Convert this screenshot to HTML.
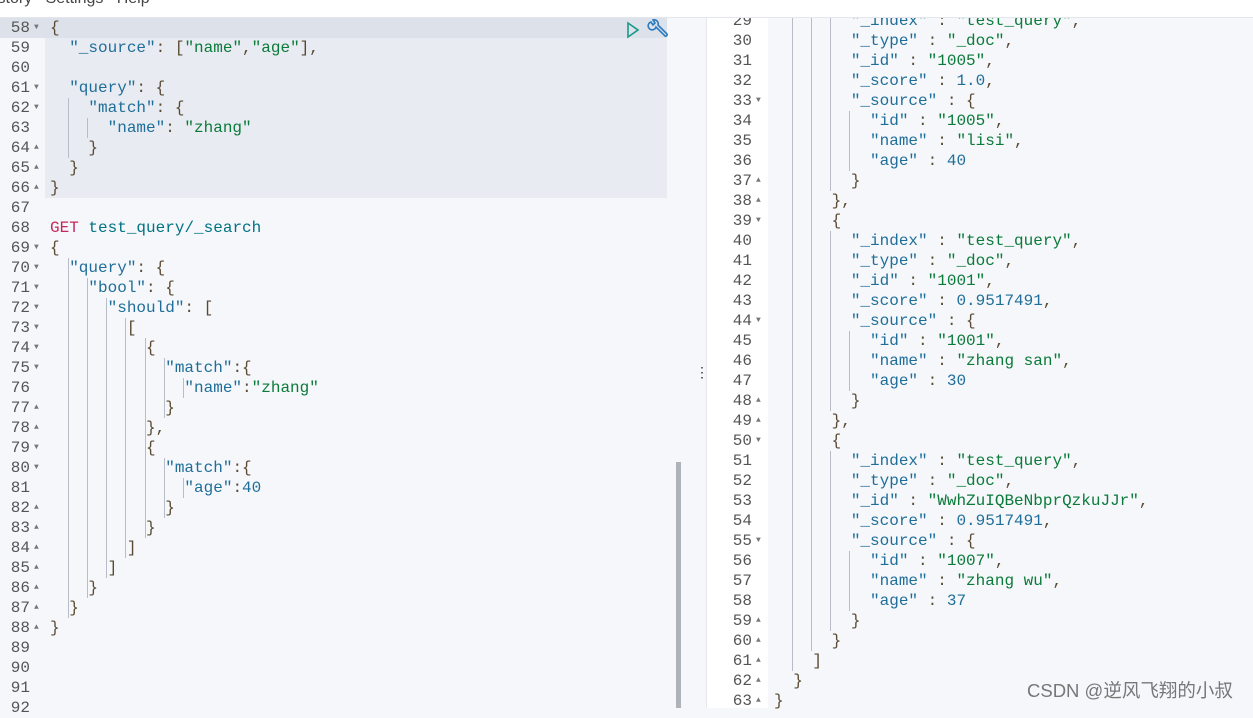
<!DOCTYPE html>
<html><head><meta charset="utf-8"><style>
body{margin:0;width:1253px;height:708px;overflow:hidden;background:#f5f7fa;position:relative;font-family:"Liberation Mono",monospace;font-size:16px}
.top{position:absolute;left:0;top:0;width:1253px;height:17px;background:#fff;border-bottom:1px solid #e3e6ec;z-index:5;overflow:hidden}
.top span{position:absolute;top:-10px;left:-6px;font-family:"Liberation Sans",sans-serif;font-size:16px;color:#444;white-space:pre}
.l{position:absolute;height:20px;line-height:20px;white-space:pre}
.n{position:absolute;height:20px;line-height:20px;color:#555;text-align:right;width:30px}
.f{position:absolute;height:20px;line-height:20px;font-size:8px;color:#777}
.k{color:#1f6e99}.s{color:#0b7a3a}.p{color:#5b4a32}.m{color:#1f6e99}.g{color:#c5285b}.u{color:#007383}
.gd{position:absolute;width:1px;background:#b7bcc7}
</style></head><body>
<div class="top"><span>istory   Settings   Help</span></div>
<div style="position:absolute;left:0;top:18px;width:45px;height:690px;background:#f5f7fa"></div>
<div style="position:absolute;left:0;top:18px;width:45px;height:20px;background:#dde2ea"></div>
<div style="position:absolute;left:45px;top:18px;width:622px;height:180px;background:#e8ebf1"></div>
<div style="position:absolute;left:45px;top:18px;width:622px;height:20px;background:#dde2ea"></div>
<svg style="position:absolute;left:625px;top:21px" width="16" height="18"><path d="M3 2 L13 9 L3 16 Z" fill="none" stroke="#1a9a8a" stroke-width="1.6"/></svg>
<svg style="position:absolute;left:647px;top:19px" width="22" height="22"><path d="M4 3 a4 4 0 1 0 5 5 l9 9 a1.5 1.5 0 0 0 2 -2 l-9 -9 a4 4 0 0 0 -5 -5 l2 3 -2 2 z" fill="none" stroke="#2a7ac0" stroke-width="1.6"/></svg>
<div style="position:absolute;left:676px;top:462px;width:5px;height:246px;background:#aeb2b9"></div>
<div style="position:absolute;left:688px;top:18px;width:18px;height:690px;background:#f5f7fa"></div>
<div style="position:absolute;left:695px;top:364px;color:#333;font-family:'Liberation Sans';font-size:14px">⋮</div>
<div style="position:absolute;left:706px;top:18px;width:62px;height:690px;background:#fff"></div>
<div style="position:absolute;left:706px;top:18px;width:1px;height:690px;background:#e6e8ec"></div>

<div id="L">
<div class="n" style="left:0;top:18px">58</div><div class="f" style="left:34px;top:18px">▼</div>
<div class="n" style="left:0;top:38px">59</div>
<div class="n" style="left:0;top:58px">60</div>
<div class="n" style="left:0;top:78px">61</div><div class="f" style="left:34px;top:78px">▼</div>
<div class="n" style="left:0;top:98px">62</div><div class="f" style="left:34px;top:98px">▼</div>
<div class="n" style="left:0;top:118px">63</div>
<div class="n" style="left:0;top:138px">64</div><div class="f" style="left:34px;top:138px">▲</div>
<div class="n" style="left:0;top:158px">65</div><div class="f" style="left:34px;top:158px">▲</div>
<div class="n" style="left:0;top:178px">66</div><div class="f" style="left:34px;top:178px">▲</div>
<div class="n" style="left:0;top:198px">67</div>
<div class="n" style="left:0;top:218px">68</div>
<div class="n" style="left:0;top:238px">69</div><div class="f" style="left:34px;top:238px">▼</div>
<div class="n" style="left:0;top:258px">70</div><div class="f" style="left:34px;top:258px">▼</div>
<div class="n" style="left:0;top:278px">71</div><div class="f" style="left:34px;top:278px">▼</div>
<div class="n" style="left:0;top:298px">72</div><div class="f" style="left:34px;top:298px">▼</div>
<div class="n" style="left:0;top:318px">73</div><div class="f" style="left:34px;top:318px">▼</div>
<div class="n" style="left:0;top:338px">74</div><div class="f" style="left:34px;top:338px">▼</div>
<div class="n" style="left:0;top:358px">75</div><div class="f" style="left:34px;top:358px">▼</div>
<div class="n" style="left:0;top:378px">76</div>
<div class="n" style="left:0;top:398px">77</div><div class="f" style="left:34px;top:398px">▲</div>
<div class="n" style="left:0;top:418px">78</div><div class="f" style="left:34px;top:418px">▲</div>
<div class="n" style="left:0;top:438px">79</div><div class="f" style="left:34px;top:438px">▼</div>
<div class="n" style="left:0;top:458px">80</div><div class="f" style="left:34px;top:458px">▼</div>
<div class="n" style="left:0;top:478px">81</div>
<div class="n" style="left:0;top:498px">82</div><div class="f" style="left:34px;top:498px">▲</div>
<div class="n" style="left:0;top:518px">83</div><div class="f" style="left:34px;top:518px">▲</div>
<div class="n" style="left:0;top:538px">84</div><div class="f" style="left:34px;top:538px">▲</div>
<div class="n" style="left:0;top:558px">85</div><div class="f" style="left:34px;top:558px">▲</div>
<div class="n" style="left:0;top:578px">86</div><div class="f" style="left:34px;top:578px">▲</div>
<div class="n" style="left:0;top:598px">87</div><div class="f" style="left:34px;top:598px">▲</div>
<div class="n" style="left:0;top:618px">88</div><div class="f" style="left:34px;top:618px">▲</div>
<div class="n" style="left:0;top:638px">89</div>
<div class="n" style="left:0;top:658px">90</div>
<div class="n" style="left:0;top:678px">91</div>
<div class="n" style="left:0;top:698px">92</div>

<div class="l" style="left:50px;top:18px"><span class="p">{</span></div>
<div class="l" style="left:50px;top:38px">  <span class="k">"_source"</span><span class="p">: [</span><span class="s">"name"</span><span class="p">,</span><span class="s">"age"</span><span class="p">],</span></div>
<div class="l" style="left:50px;top:78px">  <span class="k">"query"</span><span class="p">: {</span></div>
<div class="l" style="left:50px;top:98px">    <span class="k">"match"</span><span class="p">: {</span></div>
<div class="l" style="left:50px;top:118px">      <span class="k">"name"</span><span class="p">: </span><span class="s">"zhang"</span></div>
<div class="l" style="left:50px;top:138px">    <span class="p">}</span></div>
<div class="l" style="left:50px;top:158px">  <span class="p">}</span></div>
<div class="l" style="left:50px;top:178px"><span class="p">}</span></div>
<div class="l" style="left:50px;top:218px"><span class="g">GET</span> <span class="u">test_query/_search</span></div>
<div class="l" style="left:50px;top:238px"><span class="p">{</span></div>
<div class="l" style="left:50px;top:258px">  <span class="k">"query"</span><span class="p">: {</span></div>
<div class="l" style="left:50px;top:278px">    <span class="k">"bool"</span><span class="p">: {</span></div>
<div class="l" style="left:50px;top:298px">      <span class="k">"should"</span><span class="p">: [</span></div>
<div class="l" style="left:50px;top:318px">        <span class="p">[</span></div>
<div class="l" style="left:50px;top:338px">          <span class="p">{</span></div>
<div class="l" style="left:50px;top:358px">            <span class="k">"match"</span><span class="p">:{</span></div>
<div class="l" style="left:50px;top:378px">              <span class="k">"name"</span><span class="p">:</span><span class="s">"zhang"</span></div>
<div class="l" style="left:50px;top:398px">            <span class="p">}</span></div>
<div class="l" style="left:50px;top:418px">          <span class="p">},</span></div>
<div class="l" style="left:50px;top:438px">          <span class="p">{</span></div>
<div class="l" style="left:50px;top:458px">            <span class="k">"match"</span><span class="p">:{</span></div>
<div class="l" style="left:50px;top:478px">              <span class="k">"age"</span><span class="p">:</span><span class="m">40</span></div>
<div class="l" style="left:50px;top:498px">            <span class="p">}</span></div>
<div class="l" style="left:50px;top:518px">          <span class="p">}</span></div>
<div class="l" style="left:50px;top:538px">        <span class="p">]</span></div>
<div class="l" style="left:50px;top:558px">      <span class="p">]</span></div>
<div class="l" style="left:50px;top:578px">    <span class="p">}</span></div>
<div class="l" style="left:50px;top:598px">  <span class="p">}</span></div>
<div class="l" style="left:50px;top:618px"><span class="p">}</span></div>

<div class="gd" style="left:68px;top:98px;height:60px"></div>
<div class="gd" style="left:87px;top:118px;height:20px"></div>
<div class="gd" style="left:68px;top:258px;height:360px"></div>
<div class="gd" style="left:87px;top:278px;height:320px"></div>
<div class="gd" style="left:106px;top:298px;height:280px"></div>
<div class="gd" style="left:125px;top:318px;height:240px"></div>
<div class="gd" style="left:145px;top:338px;height:200px"></div>
<div class="gd" style="left:164px;top:358px;height:60px"></div>
<div class="gd" style="left:164px;top:458px;height:60px"></div>
<div class="gd" style="left:183px;top:378px;height:20px"></div>
<div class="gd" style="left:183px;top:478px;height:20px"></div>
</div>

<div id="R">
<div class="n" style="left:722px;top:11px">29</div>
<div class="n" style="left:722px;top:31px">30</div>
<div class="n" style="left:722px;top:51px">31</div>
<div class="n" style="left:722px;top:71px">32</div>
<div class="n" style="left:722px;top:91px">33</div><div class="f" style="left:756px;top:91px">▼</div>
<div class="n" style="left:722px;top:111px">34</div>
<div class="n" style="left:722px;top:131px">35</div>
<div class="n" style="left:722px;top:151px">36</div>
<div class="n" style="left:722px;top:171px">37</div><div class="f" style="left:756px;top:171px">▲</div>
<div class="n" style="left:722px;top:191px">38</div><div class="f" style="left:756px;top:191px">▲</div>
<div class="n" style="left:722px;top:211px">39</div><div class="f" style="left:756px;top:211px">▼</div>
<div class="n" style="left:722px;top:231px">40</div>
<div class="n" style="left:722px;top:251px">41</div>
<div class="n" style="left:722px;top:271px">42</div>
<div class="n" style="left:722px;top:291px">43</div>
<div class="n" style="left:722px;top:311px">44</div><div class="f" style="left:756px;top:311px">▼</div>
<div class="n" style="left:722px;top:331px">45</div>
<div class="n" style="left:722px;top:351px">46</div>
<div class="n" style="left:722px;top:371px">47</div>
<div class="n" style="left:722px;top:391px">48</div><div class="f" style="left:756px;top:391px">▲</div>
<div class="n" style="left:722px;top:411px">49</div><div class="f" style="left:756px;top:411px">▲</div>
<div class="n" style="left:722px;top:431px">50</div><div class="f" style="left:756px;top:431px">▼</div>
<div class="n" style="left:722px;top:451px">51</div>
<div class="n" style="left:722px;top:471px">52</div>
<div class="n" style="left:722px;top:491px">53</div>
<div class="n" style="left:722px;top:511px">54</div>
<div class="n" style="left:722px;top:531px">55</div><div class="f" style="left:756px;top:531px">▼</div>
<div class="n" style="left:722px;top:551px">56</div>
<div class="n" style="left:722px;top:571px">57</div>
<div class="n" style="left:722px;top:591px">58</div>
<div class="n" style="left:722px;top:611px">59</div><div class="f" style="left:756px;top:611px">▲</div>
<div class="n" style="left:722px;top:631px">60</div><div class="f" style="left:756px;top:631px">▲</div>
<div class="n" style="left:722px;top:651px">61</div><div class="f" style="left:756px;top:651px">▲</div>
<div class="n" style="left:722px;top:671px">62</div><div class="f" style="left:756px;top:671px">▲</div>
<div class="n" style="left:722px;top:691px">63</div><div class="f" style="left:756px;top:691px">▲</div>

<div class="l" style="left:774px;top:11px">        <span class="k">"_index"</span><span class="p"> : </span><span class="s">"test_query"</span><span class="p">,</span></div>
<div class="l" style="left:774px;top:31px">        <span class="k">"_type"</span><span class="p"> : </span><span class="s">"_doc"</span><span class="p">,</span></div>
<div class="l" style="left:774px;top:51px">        <span class="k">"_id"</span><span class="p"> : </span><span class="s">"1005"</span><span class="p">,</span></div>
<div class="l" style="left:774px;top:71px">        <span class="k">"_score"</span><span class="p"> : </span><span class="m">1.0</span><span class="p">,</span></div>
<div class="l" style="left:774px;top:91px">        <span class="k">"_source"</span><span class="p"> : {</span></div>
<div class="l" style="left:774px;top:111px">          <span class="k">"id"</span><span class="p"> : </span><span class="s">"1005"</span><span class="p">,</span></div>
<div class="l" style="left:774px;top:131px">          <span class="k">"name"</span><span class="p"> : </span><span class="s">"lisi"</span><span class="p">,</span></div>
<div class="l" style="left:774px;top:151px">          <span class="k">"age"</span><span class="p"> : </span><span class="m">40</span></div>
<div class="l" style="left:774px;top:171px">        <span class="p">}</span></div>
<div class="l" style="left:774px;top:191px">      <span class="p">},</span></div>
<div class="l" style="left:774px;top:211px">      <span class="p">{</span></div>
<div class="l" style="left:774px;top:231px">        <span class="k">"_index"</span><span class="p"> : </span><span class="s">"test_query"</span><span class="p">,</span></div>
<div class="l" style="left:774px;top:251px">        <span class="k">"_type"</span><span class="p"> : </span><span class="s">"_doc"</span><span class="p">,</span></div>
<div class="l" style="left:774px;top:271px">        <span class="k">"_id"</span><span class="p"> : </span><span class="s">"1001"</span><span class="p">,</span></div>
<div class="l" style="left:774px;top:291px">        <span class="k">"_score"</span><span class="p"> : </span><span class="m">0.9517491</span><span class="p">,</span></div>
<div class="l" style="left:774px;top:311px">        <span class="k">"_source"</span><span class="p"> : {</span></div>
<div class="l" style="left:774px;top:331px">          <span class="k">"id"</span><span class="p"> : </span><span class="s">"1001"</span><span class="p">,</span></div>
<div class="l" style="left:774px;top:351px">          <span class="k">"name"</span><span class="p"> : </span><span class="s">"zhang san"</span><span class="p">,</span></div>
<div class="l" style="left:774px;top:371px">          <span class="k">"age"</span><span class="p"> : </span><span class="m">30</span></div>
<div class="l" style="left:774px;top:391px">        <span class="p">}</span></div>
<div class="l" style="left:774px;top:411px">      <span class="p">},</span></div>
<div class="l" style="left:774px;top:431px">      <span class="p">{</span></div>
<div class="l" style="left:774px;top:451px">        <span class="k">"_index"</span><span class="p"> : </span><span class="s">"test_query"</span><span class="p">,</span></div>
<div class="l" style="left:774px;top:471px">        <span class="k">"_type"</span><span class="p"> : </span><span class="s">"_doc"</span><span class="p">,</span></div>
<div class="l" style="left:774px;top:491px">        <span class="k">"_id"</span><span class="p"> : </span><span class="s">"WwhZuIQBeNbprQzkuJJr"</span><span class="p">,</span></div>
<div class="l" style="left:774px;top:511px">        <span class="k">"_score"</span><span class="p"> : </span><span class="m">0.9517491</span><span class="p">,</span></div>
<div class="l" style="left:774px;top:531px">        <span class="k">"_source"</span><span class="p"> : {</span></div>
<div class="l" style="left:774px;top:551px">          <span class="k">"id"</span><span class="p"> : </span><span class="s">"1007"</span><span class="p">,</span></div>
<div class="l" style="left:774px;top:571px">          <span class="k">"name"</span><span class="p"> : </span><span class="s">"zhang wu"</span><span class="p">,</span></div>
<div class="l" style="left:774px;top:591px">          <span class="k">"age"</span><span class="p"> : </span><span class="m">37</span></div>
<div class="l" style="left:774px;top:611px">        <span class="p">}</span></div>
<div class="l" style="left:774px;top:631px">      <span class="p">}</span></div>
<div class="l" style="left:774px;top:651px">    <span class="p">]</span></div>
<div class="l" style="left:774px;top:671px">  <span class="p">}</span></div>
<div class="l" style="left:774px;top:691px"><span class="p">}</span></div>

<div class="gd" style="left:792px;top:18px;height:653px"></div>
<div class="gd" style="left:811px;top:18px;height:633px"></div>
<div class="gd" style="left:830px;top:18px;height:173px"></div>
<div class="gd" style="left:830px;top:231px;height:180px"></div>
<div class="gd" style="left:830px;top:451px;height:180px"></div>
<div class="gd" style="left:849px;top:111px;height:60px"></div>
<div class="gd" style="left:849px;top:331px;height:60px"></div>
<div class="gd" style="left:849px;top:551px;height:60px"></div>
</div>
<div style="position:absolute;left:1027px;top:677px;font-family:'Liberation Sans','Noto Sans CJK SC',sans-serif;font-size:18.5px;color:#777;white-space:nowrap">CSDN @逆风飞翔的小叔</div>
</body></html>
